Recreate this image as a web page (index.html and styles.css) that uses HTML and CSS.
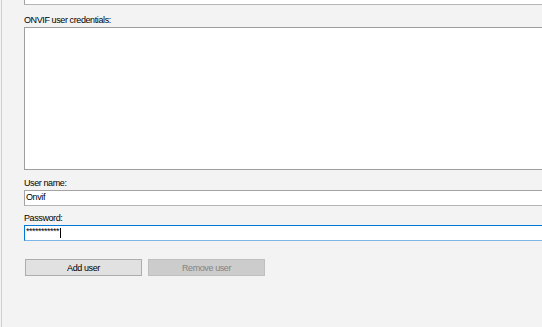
FILE: index.html
```html
<!DOCTYPE html>
<html lang="en">
<head>
  <meta charset="UTF-8">
  <title>ONVIF users</title>
  <link rel="stylesheet" href="styles.css">
</head>
<body>
  <div class="panel">
    <div class="form">
      <div class="textbox">554</div>

      <div class="label">ONVIF user credentials:</div>
      <div class="listbox"></div>

      <div class="label label-user">User name:</div>
      <div class="textbox">Onvif</div>

      <div class="label label-pass">Password:</div>
      <div class="textbox focused"><span class="mask">***********</span><span class="caret"></span></div>

      <div class="buttons">
        <button class="btn">Add user</button>
        <button class="btn" disabled>Remove user</button>
      </div>
    </div>
  </div>
</body>
</html>
```

FILE: styles.css
```css
html, body {
  margin: 0;
  height: 100%;
  overflow: hidden;
}

body {
  background: #f3f3f3;
  font-family: 'Liberation Sans', Arial, sans-serif;
  font-size: 9px;
  letter-spacing: -0.4px;
  color: #000;
}

.panel {
  height: 100%;
  margin-left: 1px;
  border-left: 1px solid #cfcfcf;
  overflow: hidden;
}

.form {
  margin-top: -11px;
  padding-left: 22px;
}

.textbox {
  box-sizing: border-box;
  width: 540px;
  height: 16px;
  padding: 0 1px;
  line-height: 12px;
  background: #fff;
  border: 1px solid #a3a3a3;
  border-bottom-color: #b5b5b5;
  white-space: nowrap;
}

.textbox.focused {
  border-color: #0078d7;
  border-bottom-color: #7db6e6;
  display: flex;
  align-items: flex-start;
}

.mask {
  line-height: 10px;
  letter-spacing: -0.5px;
}

.caret {
  width: 1px;
  height: 10px;
  margin: 2px 0 0 1px;
  background: #000;
}

.label {
  margin-top: 9px;
  line-height: 13px;
}

.label-user {
  margin-top: 7px;
}

.label-pass {
  margin-top: 6px;
}

.listbox {
  box-sizing: border-box;
  width: 540px;
  height: 143px;
  background: #fff;
  border: 1px solid #9e9e9e;
}

.buttons {
  display: flex;
  gap: 6px;
  margin-top: 18px;
  padding-left: 1px;
}

.btn {
  box-sizing: border-box;
  width: 117px;
  height: 17px;
  padding: 0;
  font: inherit;
  letter-spacing: inherit;
  line-height: 14px;
  color: #000;
  background: #e1e1e1;
  border: 1px solid #adadad;
  border-radius: 0;
}

.btn:disabled {
  color: #838383;
  background: #cccccc;
  border-color: #bfbfbf;
}
```
